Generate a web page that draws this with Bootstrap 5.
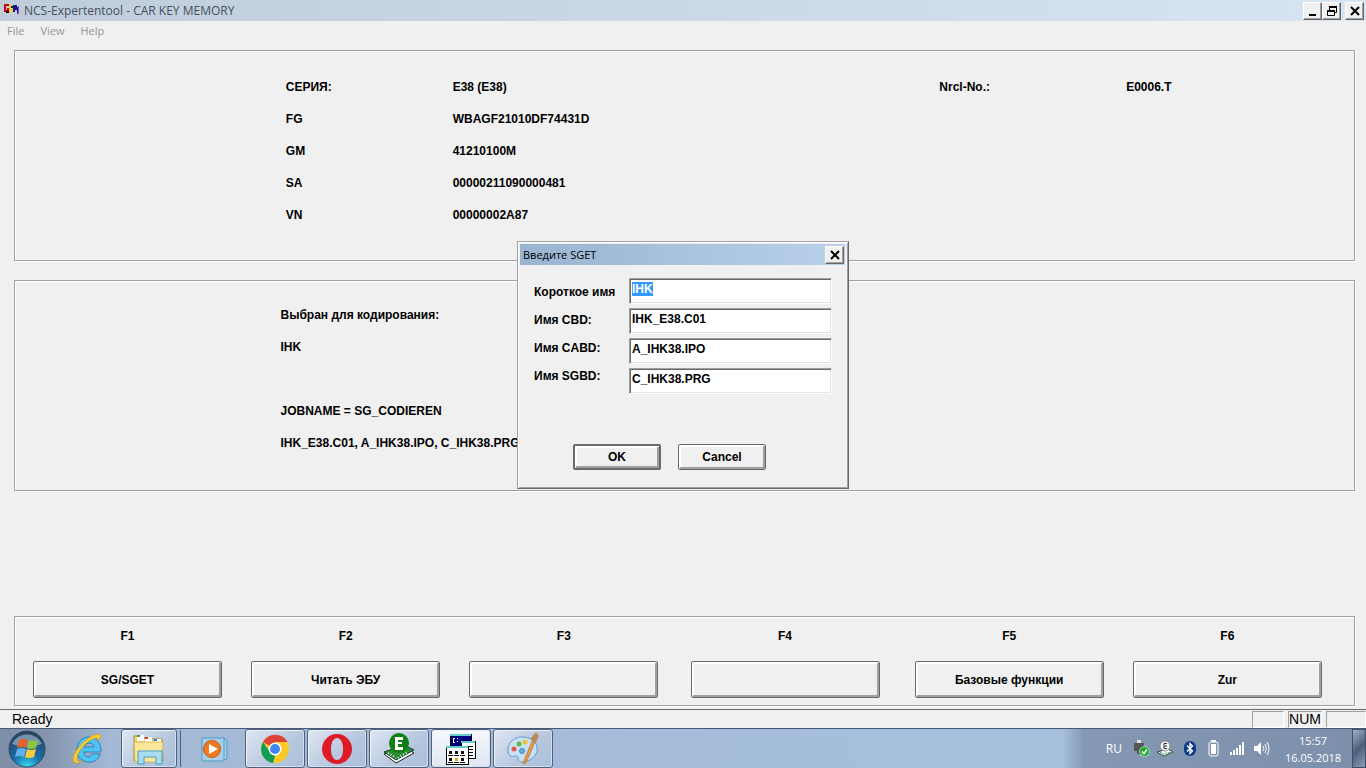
<!DOCTYPE html>
<html lang="ru">
<head>
<meta charset="utf-8">
<meta name="viewport" content="width=device-width, initial-scale=1">
<title>NCS-Expertentool - CAR KEY MEMORY</title>
<link href="https://cdn.jsdelivr.net/npm/bootstrap@5.3.0/dist/css/bootstrap.min.css" rel="stylesheet">
<style>
body{background:#f0f0f0;color:#000;font:bold 12px/16px "Liberation Sans",Arial,sans-serif}
.ui-font{font-family:"Open Sans","Noto Sans",sans-serif;font-weight:400}
.titlebar{height:21px;background:linear-gradient(90deg,#bfcddb,#d7e4f2);color:#46505c;padding:0 2px 0 4px}
.capbtn{width:19px;height:18px;padding:0;border:1px solid;border-color:#fff #696969 #696969 #fff;box-shadow:inset -1px -1px #a0a0a0;background:#f0f0f0;display:flex;align-items:center;justify-content:center}
.menubar{height:20px;font-size:11px;padding:0 7px}
.menubar a{color:#969696;text-decoration:none}
.app-main{padding:9px 11px 3px 14px}
.groups{gap:19px}
.etched{border:1px solid #a0a0a0;box-shadow:1px 1px #fff,inset 1px 1px #fff}
.car-grid{display:grid;grid-template-columns:271fr 167fr 487fr 187fr 228fr;grid-auto-rows:32px;align-items:center;height:211px;padding-top:20px}
.car-grid dt{grid-column:2}
.car-grid dd{grid-column:3}
.car-grid .far-key{grid-column:4}
.car-grid .far-val{grid-column:5}
.car-grid dt,.car-grid dd{margin:0}
.job{height:211px;padding:26px 0 0 19.8%}
.job p{margin:0 0 16px}
.fkeys{display:grid;grid-template-columns:218fr 218fr 221fr 224fr 218fr 189fr;height:90px;padding:11px 32px 0 18px}
.fkey{width:189px}
.fkey label{display:block;margin-bottom:17px}
.push{border:1px solid #696969;border-radius:2px;background:#f0f0f0;color:#000;font:inherit;padding:0;box-shadow:inset 1px 1px #fff,inset -2px -2px #a0a0a0,inset 2px 2px #fff}
.fkey .push{height:37px;width:100%}
.statusbar{height:19px;border-top:1px solid #696969;font-size:14px;font-weight:400}
.cell{height:17px;border:1px solid;border-color:#a0a0a0 #fff #fff #a0a0a0}
.dlg-layer{padding-top:2px}
.dlg{width:332px;height:248px;background:#f0f0f0;border:1px solid;border-color:#a0a0a0 #696969 #696969 #a0a0a0;box-shadow:inset 1px 1px #fff,inset -1px -1px #a0a0a0;padding:2px 3px 3px 2px}
.dlg-title{height:21px;background:linear-gradient(90deg,#99b4d1,#b9d1ea);font-size:11px;padding:0 1px 0 3px}
.dlg-body{padding:13px 13px 0 14px}
.dlg-labels{width:95px}
.dlg-labels label{height:28px;line-height:28px}
.dlg input{height:26px;width:100%;border:1px solid;border-color:#a0a0a0 #fff #fff #a0a0a0;box-shadow:inset 1px 1px #696969,inset -1px -1px #e3e3e3;background:#fff;padding:0 2px 5px;font:inherit;outline:0;border-radius:0}
.dlg input::selection{background:#39f;color:#fff}
.dlg .push{width:88px;height:26px}
.dlg .push-default{border-width:2px}
.dlg-actions{gap:17px;padding-right:26px;margin-top:50px}
.taskbar{height:40px;border-top:1px solid #46597a;background:linear-gradient(90deg,#7e8ea6 0,#8595ae 50px,#a3b9d6 110px,#a6c0dd calc(100% - 304px),#8498b3 calc(100% - 282px),#7c8fab)}
.task{height:39px;width:60px;padding:0;border:1px solid #51617b;border-radius:3px;background:linear-gradient(135deg,#dfe6f2,#b6c7de 60%,#a9bfdb);box-shadow:inset 1px 1px #eef3fa,inset -1px -1px #d3dfed;display:flex;align-items:center;justify-content:center}
.task-active{background:linear-gradient(#f5f7fb,#dfe7f2)}
.task-plain{background:none;border-color:transparent;box-shadow:none}
.task-start{width:54px}
.task-ie{width:67px}
.task-explorer{width:56px}
.task-media{width:67px;border-left-color:#51617b;margin-left:3px;margin-right:-2px}
.apps{gap:2px}
.tray{color:#fff;gap:7px}
.tray .clock{line-height:17px;width:64px;font-size:11px}
.peek{width:14px;height:39px;border:1px solid #3e5068;background:linear-gradient(135deg,#a3b2c6,#4c607c 50%,#8a9cb6);padding:0}
svg{display:block;flex:none}
</style>
</head>
<body>
<div class="d-flex flex-column min-vh-100">
 <div class="d-flex flex-column flex-grow-1 position-relative">
  <header>
   <div class="titlebar ui-font d-flex align-items-center">
    <svg width="16" height="16" viewBox="0 0 16 16" class="me-1"><path d="M0 1h5v2H2v4h1V5h3v5H3V9H0z" fill="#c00"/><path d="M2 8h4v2H2z" fill="#111"/><path d="M5 2h5v7H8V7H7v4H5z" fill="#fc3"/><path d="M7 3h2v2H7z" fill="#222"/><path d="M9 2h4v2h2v7h-2V7h-2v2H9z" fill="#111199"/><path d="M14 3h1v8h-2v-1h1z" fill="#a03cba"/></svg>
    <span class="flex-grow-1">NCS-Expertentool - CAR KEY MEMORY</span>
    <div class="d-flex">
     <button class="capbtn" aria-label="Minimize"><svg width="12" height="12"><path d="M2 9h7v2H2z"/></svg></button>
     <button class="capbtn me-1" aria-label="Restore"><svg width="12" height="12" fill="none" stroke="#000"><path d="M3.500 5V2M3 1.500h8M3 2.500h8M10.500 2v5.500H9M1 5.500h8M1 6.500h8M1.500 6v4.500h7V6"/></svg></button>
     <button class="capbtn" aria-label="Close"><svg width="12" height="12" stroke="#000" stroke-width="2"><path d="M2 2l8 8M10 2l-8 8"/></svg></button>
    </div>
   </div>
   <nav class="menubar ui-font d-flex align-items-center gap-3">
    <a href="#">File</a><a href="#">View</a><a href="#">Help</a>
   </nav>
  </header>
  <main class="app-main d-flex flex-column flex-grow-1">
   <div class="groups d-flex flex-column flex-grow-1">
    <dl class="etched car-grid mb-0">
     <dt>СЕРИЯ:</dt><dd>E38 (E38)</dd><dt class="far-key">Nrcl-No.:</dt><dd class="far-val">E0006.T</dd>
     <dt>FG</dt><dd>WBAGF21010DF74431D</dd>
     <dt>GM</dt><dd>41210100M</dd>
     <dt>SA</dt><dd>00000211090000481</dd>
     <dt>VN</dt><dd>00000002A87</dd>
    </dl>
    <section class="etched job">
     <p>Выбран для кодирования:</p>
     <p>IHK</p>
     <p>&nbsp;</p>
     <p>JOBNAME = SG_CODIEREN</p>
     <p>IHK_E38.C01, A_IHK38.IPO, C_IHK38.PRG</p>
    </section>
    <section class="etched fkeys text-center mt-auto">
     <div class="fkey"><label for="f1">F1</label><button id="f1" class="push">SG/SGET</button></div>
     <div class="fkey"><label for="f2">F2</label><button id="f2" class="push">Читать ЭБУ</button></div>
     <div class="fkey"><label for="f3">F3</label><button id="f3" class="push"></button></div>
     <div class="fkey"><label for="f4">F4</label><button id="f4" class="push"></button></div>
     <div class="fkey"><label for="f5">F5</label><button id="f5" class="push">Базовые функции</button></div>
     <div class="fkey"><label for="f6">F6</label><button id="f6" class="push">Zur</button></div>
    </section>
   </div>
  </main>
  <footer class="statusbar d-flex align-items-center">
   <span class="flex-grow-1 ps-2 ms-1">Ready</span>
   <span class="cell" style="width:32px"></span><span class="cell mx-1 d-flex align-items-center">NUM</span><span class="cell" style="width:40px"></span>
  </footer>
  <div class="dlg-layer position-absolute top-0 bottom-0 start-0 end-0 d-flex align-items-center justify-content-center">
   <form class="dlg" role="dialog" aria-labelledby="dlgTitle">
    <div class="dlg-title d-flex align-items-center justify-content-between ui-font">
     <span id="dlgTitle">Введите SGET</span>
     <button type="button" class="capbtn" aria-label="Close"><svg width="12" height="12" stroke="#000" stroke-width="2"><path d="M2 2l8 8M10 2l-8 8"/></svg></button>
    </div>
    <div class="dlg-body d-flex">
     <div class="dlg-labels d-flex flex-column">
      <label for="sg">Короткое имя</label><label for="cbd">Имя CBD:</label><label for="cabd">Имя CABD:</label><label for="sgbd">Имя SGBD:</label>
     </div>
     <div class="flex-grow-1 d-flex flex-column gap-1">
      <input id="sg" value="IHK"><input id="cbd" value="IHK_E38.C01"><input id="cabd" value="A_IHK38.IPO"><input id="sgbd" value="C_IHK38.PRG">
     </div>
    </div>
    <div class="dlg-actions d-flex justify-content-center">
     <button type="button" class="push push-default">OK</button><button type="button" class="push">Cancel</button>
    </div>
   </form>
  </div>
 </div>
 <div class="taskbar d-flex align-items-center ui-font">
  <button class="task task-plain task-start" aria-label="Start"><svg width="38" height="38" viewBox="0 0 38 38"><defs><radialGradient id="orb" cx=".5" cy="1" r=".9"><stop offset="0" stop-color="#35e0f5"/><stop offset=".45" stop-color="#1a6fa8"/><stop offset="1" stop-color="#274766"/></radialGradient></defs><circle cx="19" cy="19" r="18" fill="url(#orb)" stroke="#304a68"/><path d="M4 14a16 15 0 0 1 30 0q-15 6-30 0" fill="#c5d5e5" opacity=".5"/><path d="M11 10q4-2 9 0l-2 8q-5-2-9 0z" fill="#e8602c"/><path d="M21 10q4 2 9 0l-2 8q-5 2-9 0z" fill="#8cc63e"/><path d="M9 19q4-2 9 0l-2 8q-5-2-9 0z" fill="#5fb0ec"/><path d="M19 19q4 2 9 0l-2 8q-5 2-9 0z" fill="#fccb3a"/></svg></button>
  <button class="task task-plain task-ie" aria-label="Internet Explorer"><svg width="32" height="32" viewBox="0 0 32 32"><path fill-rule="evenodd" d="M17 4C9 4 5 10 5 17s5 12 12 12c6 0 10-3 11-8h-8c-1 2-2 3-3 3-3 0-5-2-5-5h17C29 10 25 4 17 4zm-5 10c1-3 2-4 5-4s4 1 5 4z" fill="#4fc3f2" stroke="#1774b4" stroke-width=".8"/><path d="M26 8c5-6 2-9-6-5C10 8-2 23 2 29c2 2 5 1 8-1-4 1-5 0-5-2C5 18 17 5 25 5q2 0 1 3z" fill="#f9cf2e" stroke="#c99510" stroke-width=".6"/></svg></button>
  <button class="task task-explorer" aria-label="Explorer"><svg width="34" height="32" viewBox="0 0 34 32"><path d="M2 3h9l2 3h17l1 22H2z" fill="#f2d774" stroke="#b18d34"/><path d="M5 2h7v6H5zM13 4h7v5h-7zM22 6h7v4h-7z" fill="#fff"/><path d="M5 2h3v2H5z" fill="#33a04a"/><path d="M13 4h3v2h-3z" fill="#d4442c"/><path d="M22 6h3v2h-3z" fill="#3478c8"/><path d="M2 9h29l-1 20H3z" fill="#f8e69a" stroke="#c7a242" stroke-width=".6"/><path d="M6 18h24v13h-6v-7H12v7H6z" fill="#a8dcf0" stroke="#4a9dc4"/></svg></button>
  <button class="task task-plain task-media" aria-label="Media Player"><svg width="30" height="30" viewBox="0 0 30 30"><path d="M3 4h20l2-1v23l-2 1H3zM25 5l3 1v19l-3 1" fill="#a6cee6" stroke="#4f9dc7"/><circle cx="13" cy="15" r="8.500" fill="#f07820" stroke="#c85510"/><path d="M10 10l9 5-9 5z" fill="#fff"/></svg></button>
  <div class="d-flex apps">
   <button class="task" aria-label="Chrome"><svg width="30" height="30" viewBox="0 0 30 30"><circle cx="15" cy="15" r="14" fill="#fbc927"/><path d="M15 15L3 8a14 14 0 0 1 24.500 0H15z" fill="#db4437"/><path d="M3 8l7 10 5 4-2 7A14 14 0 0 1 3 8z" fill="#119d58"/><circle cx="15" cy="15" r="6.500" fill="#fff"/><circle cx="15" cy="15" r="5" fill="#4285f4"/></svg></button>
   <button class="task" aria-label="Opera"><svg width="32" height="32" viewBox="0 0 32 32"><path fill-rule="evenodd" d="M16 1a15 15 0 1 0 0 30 15 15 0 0 0 0-30zm0 4c4 0 6 5 6 11s-2 11-6 11-6-5-6-11 2-11 6-11z" fill="#dd1c28"/></svg></button>
   <button class="task" aria-label="EDIABAS"><svg width="34" height="34" viewBox="0 0 34 34"><path d="M2 22l12 9 18-10-10-6z" fill="#fff" stroke="#222"/><path d="M2 20l12 8 18-10-10-5z" fill="#2e8a35" stroke="#142"/><path d="M6 21l8 5M16 26l10-6" stroke="#dfe" stroke-width="2" stroke-dasharray="1 2"/><circle cx="17" cy="11" r="10" fill="#108012"/><path d="M13 5h8v3h-5v2h4v2h-4v3h5v3h-8z" fill="#fff"/></svg></button>
   <button class="task task-active" aria-label="NCS Expert"><svg width="32" height="32" viewBox="0 0 32 32" shape-rendering="crispEdges"><path d="M5 1h21v12H5z" fill="#00007c" stroke="#000"/><path d="M5 1h21v2H5z" fill="#6cc"/><path d="M10 5H8v4h2M12 5v1M12 8v1" stroke="#fff" fill="none"/><path d="M16 8h14v17H16z" fill="#fff" stroke="#000"/><path d="M16 8h14v2H16z" fill="#6cc"/><path d="M22 13h6M22 16h6M24 19h4M24 22h4" stroke="#000"/><path d="M1 13h22v18H1z" fill="#fff" stroke="#000"/><path d="M1 13h22v2H1z" fill="#6cc"/><path d="M4 18h3v3H4zM10 18h3v3h-3zM16 18h3v3h-3zM4 25h3v3H4zM16 25h3v3h-3z" fill="#111"/><path d="M10 25h3v3h-3z" fill="#c8b020"/><path d="M3 22.500h5M9 22.500h5M15 22.500h5M3 29.500h5M9 29.500h5M15 29.500h5" stroke="#000"/></svg></button>
   <button class="task" aria-label="Paint"><svg width="34" height="34" viewBox="0 0 34 34"><path d="M16 5C7 5 1 12 2 20c1 5 5 5 7 4s4 1 3 3c0 3 4 4 9 2 7-2 11-8 10-14S24 5 16 5z" fill="#c9e2f3" stroke="#5f9ec7"/><circle cx="8" cy="17" r="2.500" fill="#e2574a"/><circle cx="13" cy="12" r="2.500" fill="#5fb648"/><circle cx="19" cy="10" r="2.500" fill="#efc33c"/><circle cx="16" cy="19" r="2.500" fill="#6fb0dc" stroke="#3d86b8"/><path d="M17 31l9-22 3 1-9 21q-2 2-3 0z" fill="#e69a45" stroke="#a8672a" stroke-width=".6"/><path d="M26 9l-1-3 5-6q2 3 3 4l-3 6z" fill="#b98b5a"/></svg></button>
  </div>
  <div class="tray d-flex align-items-center ms-auto">
   <span class="me-1">RU</span>
   <svg width="17" height="17" viewBox="0 0 17 17"><path d="M4 0h4v3H4z" fill="#ddd"/><path d="M1 3h10v7H9v4H4v-3H1z" fill="#555"/><circle cx="11.500" cy="11.500" r="5" fill="#22a833" stroke="#dfe" stroke-width=".6"/><path d="M9 11.500l2 2 3-4" stroke="#fff" stroke-width="1.500" fill="none"/></svg>
   <svg width="17" height="17" viewBox="0 0 17 17"><path d="M0 12l7 4 9-4-5-3z" fill="#fff" stroke="#253"/><path d="M3 12l4 2 6-2" stroke="#295" fill="none" stroke-dasharray="2 1"/><circle cx="8" cy="6" r="5" fill="#f4f4f4" stroke="#888"/><path d="M10 3.500H7v5h3M7 6h3" stroke="#333" fill="none"/></svg>
   <svg width="17" height="17" viewBox="0 0 17 17"><rect x="3" y="1" width="12" height="15" rx="6" fill="#0d3c86"/><path d="M6 5.500l5.500 5.500L9 13.500v-10L11.500 6 6 11.500" stroke="#fff" stroke-width="1.300" fill="none"/></svg>
   <svg width="17" height="17" viewBox="0 0 17 17"><rect x="4" y="2" width="9" height="14" rx="2" fill="none" stroke="#fff"/><path d="M6 0h5v2H6zM6 4h5v10H6z" fill="#fff"/></svg>
   <svg width="17" height="17" viewBox="0 0 17 17"><path d="M1 12h2v3H1zM4 10h2v5H4zM7 8h2v7H7zM10 5h2v10h-2zM13 2h2v13h-2z" fill="#fff"/></svg>
   <svg width="17" height="17" viewBox="0 0 17 17"><path d="M1 6h3l4-4v13l-4-4H1z" fill="#fff"/><path d="M10 6q2 2.500 0 5M12 4q3 4.500 0 9M14 2q4 6.500 0 13" stroke="#fff" fill="none"/></svg>
   <div class="clock text-center ms-1">15:57<br>16.05.2018</div>
   <button class="peek" aria-label="Show desktop"></button>
  </div>
 </div>
</div>
<script src="https://cdn.jsdelivr.net/npm/bootstrap@5.3.0/dist/js/bootstrap.bundle.min.js"></script>
<script>
document.getElementById('sg').select();
</script>
</body>
</html>
